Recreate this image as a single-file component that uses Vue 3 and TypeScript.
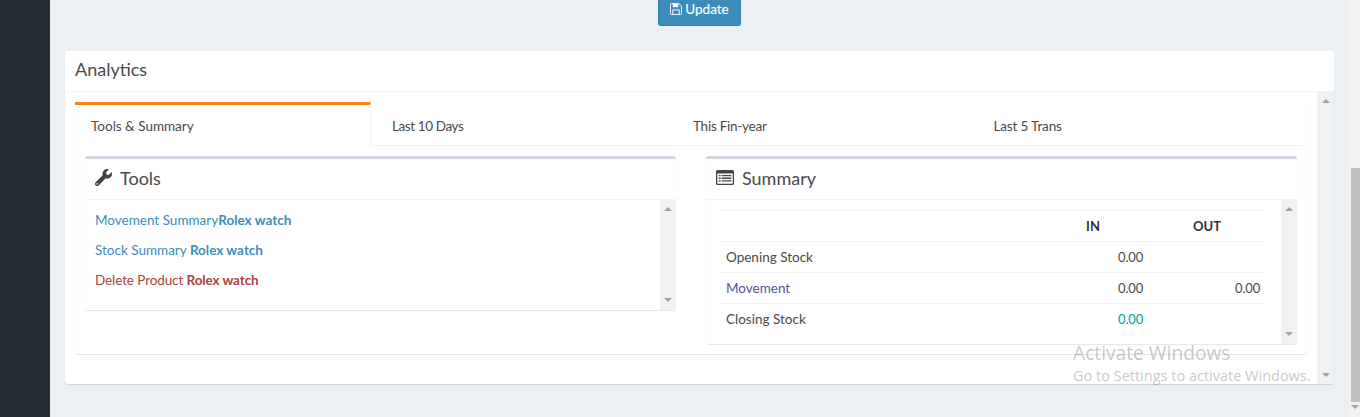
<script setup lang="ts">
const tabs = ['Tools & Summary', 'Last 10 Days', 'This Fin-year', 'Last 5 Trans'];

const rows = [
    { label: 'Opening Stock', labelClass: '', inVal: '0.00', inClass: '', outVal: '' },
    { label: 'Movement', labelClass: 'purple', inVal: '0.00', inClass: '', outVal: '0.00' },
    { label: 'Closing Stock', labelClass: '', inVal: '0.00', inClass: 'teal', outVal: '' },
];
</script>

<template>
    <div class="page">
        <aside class="sidebar"></aside>

        <main class="content">
            <div class="update-row">
                <button class="update-btn">
                    <svg class="save-icon" viewBox="0 0 13 13">
                        <path fill="none" stroke="currentColor" d="M1.500.5h8l3 3v8a1 1 0 0 1-1 1h-10a1 1 0 0 1-1-1v-10a1 1 0 0 1 1-1z"/>
                        <path fill="currentColor" d="M3 1h6v3.500H3z"/>
                        <path fill="none" stroke="currentColor" d="M3 12.500V7.500h7v5"/>
                    </svg>
                    Update
                </button>
            </div>

            <section class="card">
                <h3 class="card-title">Analytics</h3>
                <div class="card-body">
                    <div class="card-scroll">
                        <div class="tab-wrap">
                            <ul class="tabs">
                                <li v-for="(tab, i) in tabs" :key="tab" class="tab" :class="{ active: i === 0 }">{{ tab }}</li>
                            </ul>

                            <div class="panes">
                                <div class="box">
                                    <div class="box-header">
                                        <svg class="box-icon wrench" viewBox="0 0 512 512"><path fill="currentColor" d="M507.73 109.1c-2.24-9.03-13.54-12.09-20.12-5.51l-74.36 74.36-67.88-11.31-11.31-67.88 74.36-74.36c6.62-6.62 3.43-17.9-5.66-20.16-47.38-11.74-99.55.91-136.58 37.93-39.64 39.64-50.55 97.1-34.05 147.2L18.74 402.76c-24.99 24.99-24.99 65.51 0 90.5 24.99 24.99 65.51 24.99 90.5 0l213.21-213.21c50.12 16.71 107.47 5.68 147.37-34.22 37.07-37.07 49.7-89.32 37.91-136.73zM64 472c-13.25 0-24-10.75-24-24 0-13.26 10.75-24 24-24s24 10.74 24 24c0 13.25-10.75 24-24 24z"/></svg>
                                        <span>Tools</span>
                                    </div>
                                    <div class="box-body tools-body">
                                        <div class="tools-list">
                                            <a class="tool blue">Movement Summary<b>Rolex watch</b></a>
                                            <a class="tool blue">Stock Summary <b>Rolex watch</b></a>
                                            <a class="tool red">Delete Product <b>Rolex watch</b></a>
                                        </div>
                                        <div class="fake-scroll">
                                            <i class="arrow up"></i>
                                            <i class="arrow down"></i>
                                        </div>
                                    </div>
                                </div>

                                <div class="box">
                                    <div class="box-header">
                                        <svg class="box-icon list-alt" viewBox="0 0 18 15">
                                            <path fill="currentColor" fill-rule="evenodd" d="M1.5 0h15A1.5 1.5 0 0 1 18 1.5v12a1.5 1.5 0 0 1-1.5 1.5h-15A1.5 1.5 0 0 1 0 13.500v-12A1.500 1.500 0 0 1 1.500 0zM1.300 3.500v9.700c0 .300.200.500.500.500h14.400c.300 0 .500-.200.500-.500V3.500z"/>
                                            <path fill="currentColor" d="M2.700 5h2v1.300h-2zM2.700 7.600h2v1.300h-2zM2.700 10.200h2v1.300h-2zM5.700 5h9.600v1.300H5.700zM5.700 7.600h9.600v1.300H5.700zM5.700 10.200h9.600v1.300H5.700z"/>
                                        </svg>
                                        <span>Summary</span>
                                    </div>
                                    <div class="box-body summary-body">
                                        <table class="summary">
                                            <thead>
                                                <tr>
                                                    <th></th>
                                                    <th class="center">IN</th>
                                                    <th class="center">OUT</th>
                                                </tr>
                                            </thead>
                                            <tbody>
                                                <tr v-for="row in rows" :key="row.label">
                                                    <td :class="row.labelClass">{{ row.label }}</td>
                                                    <td class="num" :class="row.inClass">{{ row.inVal }}</td>
                                                    <td class="num">{{ row.outVal }}</td>
                                                </tr>
                                            </tbody>
                                        </table>
                                        <div class="fake-scroll">
                                            <i class="arrow up"></i>
                                            <i class="arrow down"></i>
                                        </div>
                                    </div>
                                </div>
                            </div>
                        </div>
                    </div>
                    <div class="fake-scroll outer">
                        <i class="arrow up"></i>
                        <i class="arrow down"></i>
                    </div>
                </div>
            </section>
        </main>

        <div class="page-scroll">
            <div class="page-thumb"></div>
            <i class="arrow down"></i>
        </div>

        <div class="watermark">
            <div class="wm-title">Activate Windows</div>
            <div class="wm-sub">Go to Settings to activate Windows.</div>
        </div>
    </div>
</template>

<style>
html, body {
    margin: 0;
    overflow: hidden;
}
</style>

<style scoped>
.page {
    position: relative;
    display: flex;
    width: 1360px;
    height: 417px;
    overflow: hidden;
    background: #ecf0f5;
    font-family: "Lato", "Noto Sans", sans-serif;
    font-size: 13.5px;
    color: #4a4a4a;
}

.sidebar {
    width: 50px;
    flex: none;
    background: #222d32;
}

.content {
    flex: 1;
    padding: 0 15px;
    min-width: 0;
}

.update-row {
    display: flex;
    justify-content: center;
    height: 51px;
}

.update-btn {
    display: flex;
    align-items: center;
    justify-content: center;
    gap: 3px;
    width: 83px;
    height: 26px;
    padding: 0 0 7px;
    border: 1px solid #367fa9;
    border-top: 0;
    border-radius: 0 0 3px 3px;
    background: #3c8dbc;
    color: #fff;
    font: inherit;
    font-size: 13.500px;
    -webkit-text-stroke: 0.15px #fff;
}

.save-icon {
    width: 12px;
    height: 12px;
}

.card {
    width: 1269px;
    height: 333px;
    background: #fff;
    border-radius: 3px;
    box-shadow: 0 1px 1px rgba(0, 0, 0, 0.12);
}

.card-title {
    margin: 0;
    height: 41px;
    padding: 8px 10px 0;
    box-sizing: border-box;
    border-bottom: 1px solid #f4f4f4;
    font-size: 18px;
    font-weight: 400;
    line-height: 20px;
}

.card-body {
    display: flex;
    height: 292px;
}

.card-scroll {
    flex: 1;
    padding: 10px 10px 0;
    min-width: 0;
}

.tab-wrap {
    width: 1232px;
    height: 252px;
    background: #fff;
    border-radius: 3px;
    box-shadow: 0 1px 1px rgba(0, 0, 0, 0.1), 0 0 1px rgba(0, 0, 0, 0.04);
}

.tabs {
    display: grid;
    grid-template-columns: 301px 301px 300.5px 1fr;
    margin: 0;
    padding: 0;
    list-style: none;
    border-bottom: 1px solid #f4f4f4;
    box-sizing: border-box;
    height: 44px;
}

.tab {
    padding: 12px 16px 0;
    box-sizing: border-box;
    height: 43px;
    line-height: 18px;
    border-top: 3px solid transparent;
}

.tab:nth-child(2) {
    letter-spacing: -0.4px;
}

.tab:nth-child(3) {
    letter-spacing: -0.25px;
}

.tab:nth-child(4) {
    letter-spacing: -0.15px;
}

.tab.active {
    height: 44px;
    margin-bottom: -1px;
    background: #fff;
    border-top-color: #ff851b;
    border-right: 1px solid #f4f4f4;
    width: 296px;
}

.panes {
    display: flex;
    align-items: flex-start;
    gap: 30px;
    padding: 10px 10px 0;
}

.box {
    flex: 1;
    min-width: 0;
    background: #fff;
    border-top: 3px solid #d2d6de;
    border-radius: 3px;
    box-shadow: 0 1px 1px rgba(0, 0, 0, 0.1);
}

.box-header {
    display: flex;
    align-items: center;
    height: 41px;
    padding: 0 10px 3px;
    box-sizing: border-box;
    border-bottom: 1px solid #f4f4f4;
    font-size: 18px;
    gap: 8px;
}

.box-icon {
    flex: none;
    color: #444;
}

.wrench {
    width: 17px;
    height: 17px;
}

.list-alt {
    width: 18px;
    height: 15px;
}

.box-body {
    display: flex;
    justify-content: space-between;
}

.tools-body {
    height: 110px;
}

.tools-list {
    display: flex;
    flex-direction: column;
    padding: 11px 10px 0;
}

.tool {
    display: block;
    height: 30px;
    line-height: 18px;
}

.blue {
    color: #3c8dbc;
}

.red {
    color: #a94442;
    letter-spacing: -0.1px;
}

.purple {
    color: #555299;
}

.teal {
    color: #00a0a0;
}

.summary-body {
    height: 144px;
    padding-left: 14px;
}

.summary {
    width: 545px;
    height: 124px;
    margin-top: 10px;
    table-layout: fixed;
    border-collapse: collapse;
}

.summary th,
.summary td {
    height: 31px;
    padding: 0 5px 1px 6px;
    border-top: 1px solid #f4f4f4;
    box-sizing: border-box;
    font-size: 13.5px;
}

.summary th {
    font-size: 13px;
    font-weight: 700;
    color: #333;
}

.summary th:nth-child(1) {
    width: 317px;
}

.summary th:nth-child(2) {
    width: 111px;
}

.center {
    text-align: center;
}

.summary .num {
    text-align: right;
    font-size: 13px;
    letter-spacing: -0.2px;
}

.fake-scroll {
    position: relative;
    flex: none;
    width: 16px;
    background: #f1f1f1;
}

.fake-scroll.outer {
    width: 17px;
}

.arrow {
    position: absolute;
    left: 50%;
    margin-left: -4px;
    width: 0;
    height: 0;
    border-left: 4px solid transparent;
    border-right: 4px solid transparent;
}

.arrow.up {
    top: 7px;
    border-bottom: 4px solid #a3a3a3;
}

.arrow.down {
    bottom: 8px;
    border-top: 4px solid #a3a3a3;
}

.outer .arrow.down {
    bottom: 7px;
}

.page-scroll {
    position: relative;
    flex: none;
    width: 11px;
    background: #f1f1f1;
}

.page-scroll .arrow {
    left: 6px;
}

.page-thumb {
    margin-top: 168px;
    height: 234px;
    margin-left: 2px;
    background: #c1c1c1;
}

.watermark {
    position: absolute;
    left: 1073px;
    top: 340px;
    color: rgba(120, 120, 120, 0.42);
    font-family: "Open Sans", sans-serif;
    pointer-events: none;
}

.wm-title {
    font-size: 19.2px;
    line-height: 26px;
}

.wm-sub {
    font-size: 14.5px;
    line-height: 20px;
}
</style>
